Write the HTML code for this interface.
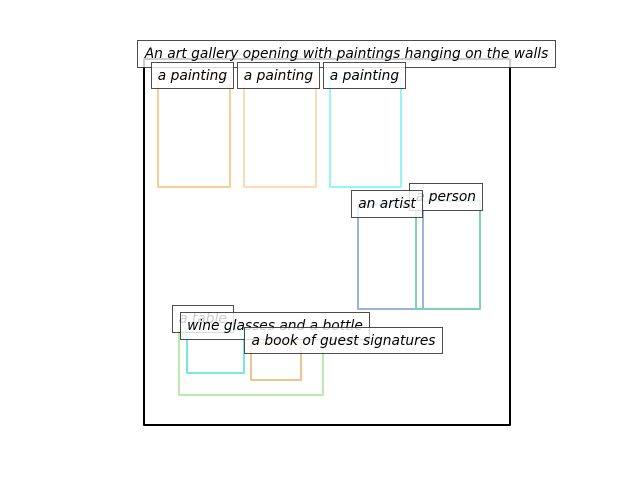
<!DOCTYPE html>
<html><head><style>
body{margin:0;width:640px;height:480px;background:#fff;position:relative;overflow:hidden;font-family:"DejaVu Sans","Liberation Sans",sans-serif;}
.b{position:absolute;box-sizing:border-box;border-radius:1px}
.l{position:absolute;box-sizing:border-box;border:1px solid rgba(0,0,0,0.7);background:rgba(255,255,255,0.8);font-style:italic;font-size:13.8px;color:#000;line-height:27px;text-align:center;white-space:nowrap}
</style></head><body>
<div class="b" style="left:143px;top:58px;width:368px;height:368px;border:2px solid #000"></div>
<div class="b" style="left:157px;top:77px;width:74px;height:111px;border:2px solid #fdcc94"></div>
<div class="b" style="left:243px;top:77px;width:74px;height:111px;border:2px solid #fcdcb0"></div>
<div class="b" style="left:329px;top:77px;width:73px;height:111px;border:2px solid #94f6f8"></div>
<div class="b" style="left:357px;top:204px;width:67px;height:106px;border:2px solid #98b3dc"></div>
<div class="b" style="left:415px;top:200px;width:66px;height:110px;border:2px solid #80d1b0"></div>
<div class="b" style="left:178px;top:327px;width:146px;height:69px;border:2px solid #bde8ae"></div>
<div class="b" style="left:186px;top:329px;width:59px;height:45px;border:2px solid #78e8d8"></div>
<div class="b" style="left:250px;top:342px;width:52px;height:39px;border:2px solid #ecc48e"></div>
<div class="l" style="left:137px;top:40px;width:419px;height:28px">An art gallery opening with paintings hanging on the walls</div>
<div class="l" style="left:151px;top:62px;width:83px;height:27px">a painting</div>
<div class="l" style="left:237px;top:62px;width:83px;height:27px">a painting</div>
<div class="l" style="left:323px;top:62px;width:83px;height:27px">a painting</div>
<div class="l" style="left:409px;top:183px;width:74px;height:28px">a person</div>
<div class="l" style="left:351px;top:190px;width:72px;height:28px">an artist</div>
<div class="l" style="left:172px;top:305px;width:62px;height:28px">a table</div>
<div class="l" style="left:180px;top:312px;width:190px;height:28px">wine glasses and a bottle</div>
<div class="l" style="left:244px;top:327px;width:199px;height:27px">a book of guest signatures</div>
</body></html>
